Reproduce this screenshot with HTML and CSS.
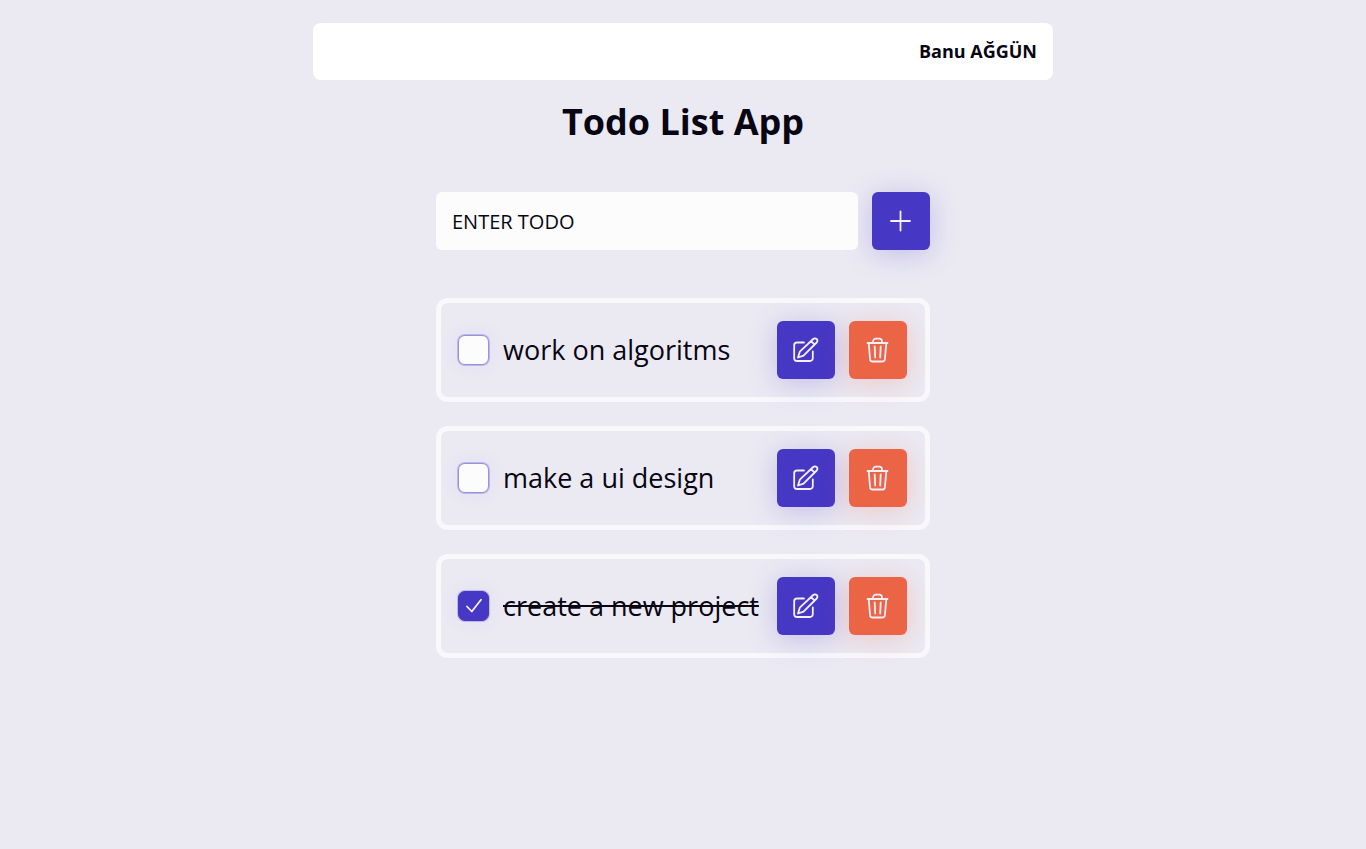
FILE: index.html
```html
<!DOCTYPE html>
<html lang="en">
<head>
<meta charset="utf-8">
<meta name="viewport" content="width=device-width, initial-scale=1">
<title>Todo List App</title>
<link rel="stylesheet" href="styles.css">
</head>
<body>
<svg class="sprite" aria-hidden="true">
  <symbol id="plus" viewBox="0 0 28 28"><path d="M13.500 4.500v19M4 14h19"/></symbol>
  <symbol id="edit" viewBox="0 0 28 28">
    <path d="M12 6.500H5a2.800 2.800 0 0 0-2.800 2.800V22.200A2.800 2.800 0 0 0 5 25h13a2.800 2.800 0 0 0 2.800-2.800V15.500"/>
    <path d="M6 21.500l1.800-5.800L21.200 3a2.400 2.400 0 0 1 3.500 3.500L11.500 19.600zM19 5l3.600 3.600"/>
  </symbol>
  <symbol id="trash" viewBox="0 0 28 28">
    <path d="M3.500 7h20M4.700 7l1.400 16.300a2.400 2.400 0 0 0 2.400 2.200h10a2.400 2.400 0 0 0 2.400-2.200L22.300 7M9 7V5.500a2.800 2.800 0 0 1 2.800-2.800h3.400A2.800 2.800 0 0 1 18 5.500V7M10.700 10.500l.5 11M16.700 10.500l-.5 11"/>
  </symbol>
  <symbol id="check" viewBox="0 0 20 20"><path d="M3 10.500l4.800 5L17 3.700"/></symbol>
</svg>
<header class="navbar"><span class="user">Banu AĞGÜN</span></header>
<main class="app">
  <h1 class="title">Todo List App</h1>
  <form class="entry">
    <input class="field" type="text" placeholder="ENTER TODO" aria-label="Enter todo">
    <button class="btn" type="button" aria-label="Add"><svg class="icon"><use href="#plus"/></svg></button>
  </form>
  <ul class="todos">
    <li class="todo">
      <label class="task"><span class="tick"><input class="box" type="checkbox"><svg class="mark"><use href="#check"/></svg></span><span class="text">work on algoritms</span></label>
      <button class="btn" type="button" aria-label="Edit"><svg class="icon"><use href="#edit"/></svg></button>
      <button class="btn btn-delete" type="button" aria-label="Delete"><svg class="icon"><use href="#trash"/></svg></button>
    </li>
    <li class="todo">
      <label class="task"><span class="tick"><input class="box" type="checkbox"><svg class="mark"><use href="#check"/></svg></span><span class="text">make a ui design</span></label>
      <button class="btn" type="button" aria-label="Edit"><svg class="icon"><use href="#edit"/></svg></button>
      <button class="btn btn-delete" type="button" aria-label="Delete"><svg class="icon"><use href="#trash"/></svg></button>
    </li>
    <li class="todo done">
      <label class="task"><span class="tick"><input class="box" type="checkbox" checked><svg class="mark"><use href="#check"/></svg></span><span class="text">create a new project</span></label>
      <button class="btn" type="button" aria-label="Edit"><svg class="icon"><use href="#edit"/></svg></button>
      <button class="btn btn-delete" type="button" aria-label="Delete"><svg class="icon"><use href="#trash"/></svg></button>
    </li>
  </ul>
</main>
</body>
</html>
```
FILE: styles.css
```css
* { box-sizing: border-box; }

body {
  margin: 0;
  padding: 23px 16px;
  background: #ebeaf3;
  color: #070612;
  font-family: "Segoe UI", "Open Sans", "Noto Sans", sans-serif;
}

.sprite { position: absolute; width: 0; height: 0; }

.navbar {
  max-width: 740px;
  margin: 0 auto;
  padding: 16px;
  border-radius: 8px;
  background: #fff;
  text-align: right;
}

.user { display: block; font-size: 18px; line-height: 25px; font-weight: 700; }

.app { max-width: 494px; margin: 0 auto; }

.title {
  margin: 16px 0 44px;
  font-size: 36px;
  line-height: 52px;
  font-weight: 700;
  text-align: center;
}

.entry { display: flex; gap: 14px; margin: 0 0 48px; }

.field {
  position: relative;
  z-index: 1;
  flex: 1;
  min-width: 0;
  height: 58px;
  padding: 0 16px;
  border: 0;
  border-radius: 6px;
  background: #fcfcfc;
  color: inherit;
  font: 20px "Segoe UI", "Open Sans", "Noto Sans", sans-serif;
}

.field::placeholder { color: #070612; opacity: 1; }

.btn {
  display: flex;
  flex: none;
  align-items: center;
  justify-content: center;
  width: 58px;
  height: 58px;
  padding: 0;
  border: 0;
  border-radius: 6px;
  background: #4637c4;
  box-shadow: 0 4px 28px rgba(70, 55, 196, 0.25);
  cursor: pointer;
}

.btn-delete {
  background: #eb6446;
  box-shadow: 0 4px 28px rgba(235, 100, 70, 0.25);
}

.icon, .mark {
  fill: none;
  stroke: #f5f0fa;
  stroke-width: 1.8;
  stroke-linecap: round;
  stroke-linejoin: round;
}

.icon { width: 28px; height: 28px; }

.todos {
  display: flex;
  flex-direction: column;
  gap: 24px;
  margin: 0;
  padding: 0;
  list-style: none;
}

.todo {
  display: flex;
  align-items: center;
  gap: 14px;
  padding: 18px 18px 18px 16px;
  border: 5px solid #f9f9fc;
  border-radius: 12px;
}

.task { display: flex; flex: 1; align-items: center; gap: 13px; min-width: 0; }

.tick { display: grid; flex: none; place-items: center; width: 33px; }

.box, .mark { grid-area: 1 / 1; }

.box {
  width: 31px;
  height: 30px;
  margin: 0;
  appearance: none;
  border: 1px solid #9a8fe0;
  border-radius: 7px;
  background: #fcfcfc;
  box-shadow: 0 0 0 1px rgba(70, 55, 196, 0.25), 0 0 20px rgba(70, 55, 196, 0.08);
}

.box:checked { border-color: #4637c4; background: #4637c4; }

.mark { width: 20px; height: 20px; visibility: hidden; pointer-events: none; }

.box:checked + .mark { visibility: visible; }

.text { font-size: 27px; line-height: 40px; white-space: nowrap; }

.done .text { text-decoration: line-through; text-decoration-thickness: 2px; }
```
